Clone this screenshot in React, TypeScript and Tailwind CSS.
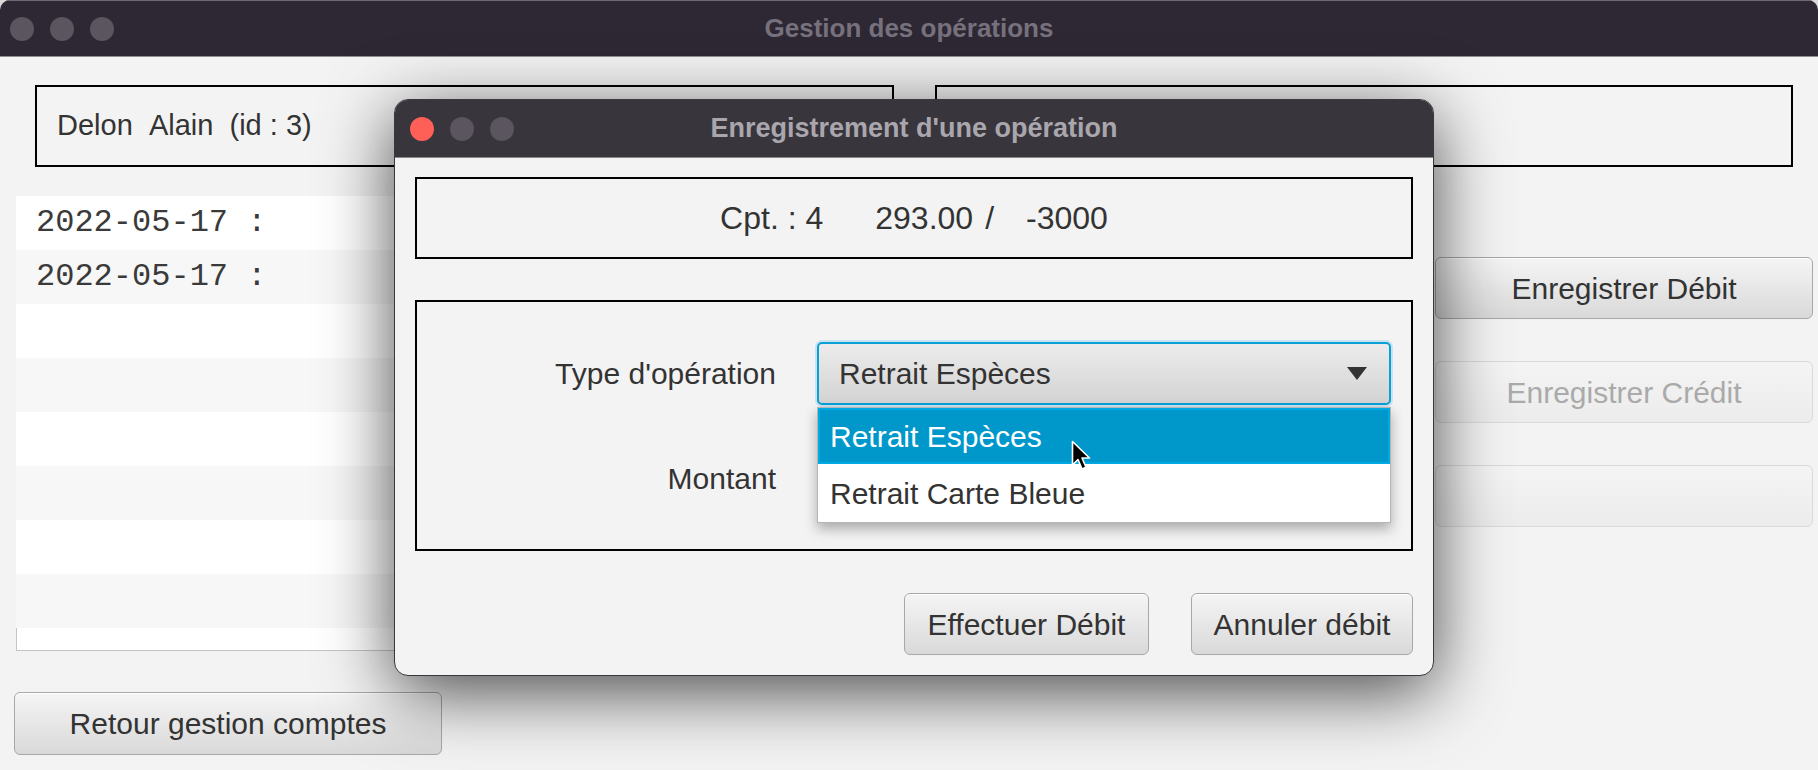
import React from 'react';

const Lights: React.FC<{ red?: boolean }> = ({ red }) => (
  <div className="flex items-center gap-[16px]">
    <span className={`w-[24px] h-[24px] rounded-full ${red ? 'bg-[#fe5f57]' : 'bg-[#5a555f]'}`} />
    <span className="w-[24px] h-[24px] rounded-full bg-[#5a555f]" />
    <span className="w-[24px] h-[24px] rounded-full bg-[#5a555f]" />
  </div>
);

const btn =
  'rounded-[6px] border border-[#a8a8a8] bg-linear-to-b from-[#f5f5f5] to-[#d9d9d9] shadow-[inset_0_1px_0_#ffffff] text-[30px] text-[#333] flex items-center justify-center';

const btnOff =
  'rounded-[6px] border border-[#dadada] bg-linear-to-b from-[#f4f4f4] to-[#ececec] text-[30px] text-[#aaaaaa] flex items-center justify-center';

const rows = [true, true, false, false, false, false, false, false];

export default function App() {
  return (
    <div className="w-[1818px] h-[770px] bg-[#d9d9d9] overflow-hidden font-['Liberation_Sans',Arial,sans-serif] text-[#333]">
      <div className="relative h-full rounded-t-[10px] bg-[#f3f3f3] overflow-hidden">
        {/* Title bar */}
        <div className="h-[57px] bg-[#2d2833] border-t border-t-[#6d6873] border-b border-b-[#8f8f8f] grid grid-cols-[300px_1fr_300px] items-center">
          <div className="pl-[10px]">
            <Lights />
          </div>
          <div className="text-center text-[26px] font-bold text-[#77717d]">Gestion des opérations</div>
          <div />
        </div>

        {/* Top boxes */}
        <div className="flex gap-[41px] pl-[35px] pr-[25px] pt-[28px]">
          <div className="w-[859px] h-[82px] border-2 border-black flex items-center pl-[20px] text-[29px]">
            Delon&nbsp;&nbsp;Alain&nbsp;&nbsp;(id : 3)
          </div>
          <div className="flex-1 h-[82px] border-2 border-black" />
        </div>

        {/* List + actions */}
        <div className="flex mt-[29px] pl-[16px]">
          <div className="w-[1400px] h-[455px] bg-white border-l border-b border-[#c4c4c4]">
            {rows.map((filled, i) => (
              <div
                key={i}
                className={`-ml-px h-[54px] flex items-center pl-[20px] font-['Liberation_Mono',monospace] text-[32px] text-[#3a3a3a] ${
                  i % 2 === 0 ? 'bg-white' : 'bg-[#f7f7f7]'
                }`}
              >
                {filled ? '2022-05-17 :' : ''}
              </div>
            ))}
          </div>
          <div className="ml-[19px] w-[378px] pt-[61px] flex flex-col gap-[42px]">
            <div className={`${btn} h-[62px] from-[#ececec] to-[#d2d2d2]`}>Enregistrer Débit</div>
            <div className={`${btnOff} h-[62px]`}>Enregistrer Crédit</div>
            <div className={`${btnOff} h-[62px]`} />
          </div>
        </div>

        <div className={`${btn} ml-[14px] mt-[41px] w-[428px] h-[63px]`}>Retour gestion comptes</div>

        {/* Dialog window */}
        <div className="absolute left-[394px] top-[99px] w-[1040px] h-[577px] rounded-[14px] bg-[#f3f3f3] border border-[#3a3740] shadow-[0_16px_70px_rgba(0,0,0,0.7)] overflow-hidden">
          <div className="h-[58px] bg-[#38353c] border-b border-[#8a8a8a] grid grid-cols-[200px_1fr_200px] items-center">
            <div className="pl-[15px]">
              <Lights red />
            </div>
            <div className="text-center text-[27px] font-bold text-[#aaa6ae]">Enregistrement d'une opération</div>
            <div />
          </div>

          <div className="px-[20px] pt-[19px]">
            <div className="h-[82px] border-2 border-black flex items-center justify-center text-[32px]">
              <span>Cpt. : 4</span>
              <span className="ml-[52px]">293.00</span>
              <span className="ml-[12px]">/</span>
              <span className="ml-[32px]">-3000</span>
            </div>

            <div className="relative mt-[41px] h-[251px] border-2 border-black pt-[40px] text-[30px]">
              <div className="flex items-center">
                <div className="w-[359px] text-right">Type d'opération</div>
                <div className="ml-[41px] w-[574px] h-[63px] rounded-[5px] border-2 border-[#0a9fd6] shadow-[0_0_0_2px_rgba(120,200,235,0.35)] bg-linear-to-b from-[#ececec] to-[#d3d3d3] flex items-center justify-between pl-[20px] pr-[22px]">
                  <span>Retrait Espèces</span>
                  <svg width="20" height="13" viewBox="0 0 20 13">
                    <path d="M0 0 L20 0 L10 13 Z" fill="#333" />
                  </svg>
                </div>
              </div>
              <div className="flex items-center mt-[42px] h-[63px]">
                <div className="w-[359px] text-right">Montant</div>
              </div>

              {/* Dropdown popup */}
              <div className="absolute left-[400px] top-[105px] w-[574px] bg-white border border-[#b5b5b5] shadow-[0_6px_12px_rgba(0,0,0,0.3)]">
                <div className="h-[56px] bg-[#0097cb] border-2 border-[#00a9e2] flex items-center pl-[10px] text-white">
                  Retrait Espèces
                </div>
                <div className="h-[58px] flex items-center pl-[12px]">Retrait Carte Bleue</div>
              </div>
            </div>

            <div className="flex justify-end gap-[42px] mt-[42px]">
              <div className={`${btn} w-[245px] h-[62px]`}>Effectuer Débit</div>
              <div className={`${btn} w-[222px] h-[62px]`}>Annuler débit</div>
            </div>
          </div>

          {/* Mouse pointer */}
          <svg
            className="absolute left-[676px] top-[340px]"
            width="22"
            height="34"
            viewBox="0 0 22 34"
          >
            <path
              d="M1.5 1.5 L1.5 25 L7 19.5 L11 29 L15 27.3 L11 18 L18.5 18 Z"
              fill="#000"
              stroke="#fff"
              strokeWidth="1.6"
              strokeLinejoin="round"
            />
          </svg>
        </div>
      </div>
    </div>
  );
}
